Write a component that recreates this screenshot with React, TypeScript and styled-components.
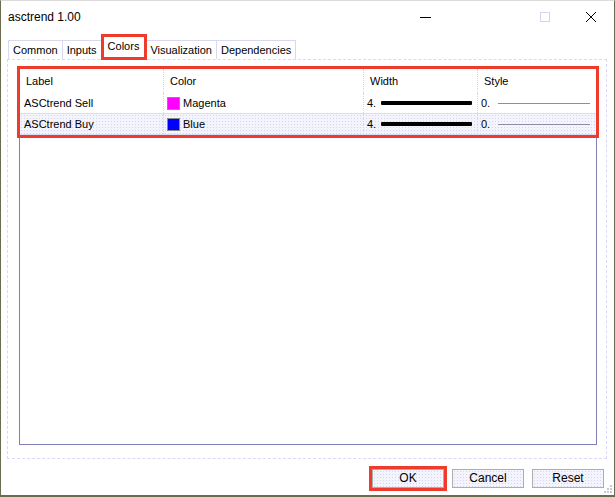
import styled, { createGlobalStyle } from 'styled-components'

const GlobalStyle = createGlobalStyle`
  html, body {
    margin: 0;
    padding: 0;
    background: #ffffff;
  }
  body {
    font-family: "Liberation Sans", Arial, sans-serif;
    font-size: 11px;
    color: #000;
  }
`

const hatch = `
  background-color: #f4f4fc;
  background-image: radial-gradient(#d4d4f2 0.6px, transparent 0.8px);
  background-size: 3px 3px;
`

const Window = styled.div`
  width: 615px;
  height: 497px;
  box-sizing: border-box;
  border: 1px solid #6b6b4f;
  border-top-color: #dcdcdc;
  border-bottom-width: 2px;
  display: flex;
  flex-direction: column;
  background: #fff;
  position: relative;
`

const TitleBar = styled.div`
  height: 31px;
  display: flex;
  align-items: center;
  padding-left: 7px;
`

const Title = styled.div`
  flex: 1;
  font-family: "Liberation Sans", Arial, sans-serif;
  font-size: 12px;
  color: #000;
`

const Caption = styled.div<{ $gap?: number }>`
  width: 46px;
  height: 31px;
  margin-right: ${p => p.$gap ?? 0}px;
  display: flex;
  align-items: center;
  justify-content: center;
`

const TabStrip = styled.div`
  display: flex;
  align-items: flex-end;
  margin: 8px 0 0 7px;
  height: 19px;
`

const Tab = styled.div<{ $active?: boolean; $first?: boolean }>`
  box-sizing: border-box;
  height: ${p => (p.$active ? 24 : 19)}px;
  padding: 0 ${p => (p.$active ? 6 : 4)}px;
  padding-bottom: ${p => (p.$active ? 4 : 0)}px;
  display: flex;
  align-items: center;
  border: 1px solid #d8d8f0;
  border-bottom: none;
  border-left-width: ${p => (p.$first ? 1 : 0)}px;
  background: #fff;
  position: relative;
  ${p =>
    p.$active &&
    `
    outline: 3px solid #ee3b2c;
    outline-offset: -2px;
    z-index: 1;
  `}
`

const Panel = styled.div`
  margin: 0 7px 0 6px;
  height: 400px;
  box-sizing: border-box;
  border: 1px dashed #d8d8f8;
  padding: 8px 9px 13px 11px;
  display: flex;
`

const ListBox = styled.div`
  flex: 1;
  border: 1px solid #8080b4;
  display: flex;
  flex-direction: column;
`

const Marked = styled.div`
  outline: 3px solid #ee3b2c;
  position: relative;
  z-index: 1;
`

const Row = styled.div<{ $head?: boolean; $alt?: boolean }>`
  display: grid;
  grid-template-columns: 143px 200px 114px 1fr;
  height: ${p => (p.$head ? 24 : 20)}px;
  border-bottom: ${p => (p.$head ? 'none' : '1px solid #dcdcf6')};
  ${p => (p.$alt ? hatch : 'background: #fff;')}
`

const Cell = styled.div<{ $sep?: boolean; $pad?: number }>`
  display: flex;
  align-items: center;
  gap: 3px;
  padding-left: ${p => p.$pad ?? 3}px;
  border-left: ${p => (p.$sep ? '1px dotted #d4d4ee' : 'none')};
  overflow: hidden;
  white-space: nowrap;
`

const Swatch = styled.span<{ $c: string }>`
  width: 11px;
  height: 11px;
  background: ${p => p.$c};
  border: 1px solid #8a8a8a;
  flex: none;
`

const ThickLine = styled.span`
  width: 91px;
  height: 4px;
  background: #000;
  border-radius: 1px;
  margin-left: 2px;
`

const ThinLine = styled.span`
  width: 92px;
  height: 1px;
  background: #8c8ca8;
  margin-left: 5px;
`

const Footer = styled.div`
  flex: 1;
  display: flex;
  justify-content: flex-end;
  align-items: center;
  gap: 8px;
  padding: 2px 10px 0 0;
`

const Button = styled.div<{ $marked?: boolean }>`
  width: 72px;
  height: 19px;
  box-sizing: border-box;
  display: flex;
  align-items: center;
  justify-content: center;
  font-size: 12px;
  border: 1px solid #adadad;
  ${hatch}
  ${p =>
    p.$marked &&
    `
    outline: 3px solid #ee3b2c;
  `}
`

const Grip = styled.svg`
  position: absolute;
  right: 1px;
  bottom: 1px;
`

const rows = [
  { label: 'ASCtrend Sell', color: '#ff00ff', name: 'Magenta' },
  { label: 'ASCtrend Buy', color: '#0000ff', name: 'Blue' },
]

export default function App() {
  return (
    <>
      <GlobalStyle />
      <Window>
        <TitleBar>
          <Title>asctrend 1.00</Title>
          <Caption $gap={73}>
            <svg width="12" height="12" viewBox="0 0 12 12">
              <line x1="0" y1="6.5" x2="11" y2="6.5" stroke="#000" strokeWidth="1" />
            </svg>
          </Caption>
          <Caption>
            <svg width="12" height="12" viewBox="0 0 12 12">
              <rect x="1.5" y="1.5" width="9" height="9" fill="none" stroke="#d4d4f0" />
            </svg>
          </Caption>
          <Caption>
            <svg width="12" height="12" viewBox="0 0 12 12">
              <path d="M1 1 L11 11 M11 1 L1 11" stroke="#000" strokeWidth="1" />
            </svg>
          </Caption>
        </TitleBar>
        <TabStrip>
          <Tab $first>Common</Tab>
          <Tab>Inputs</Tab>
          <Tab $active>Colors</Tab>
          <Tab>Visualization</Tab>
          <Tab>Dependencies</Tab>
        </TabStrip>
        <Panel>
          <ListBox>
            <Marked>
              <Row $head>
                <Cell $pad={6}>Label</Cell>
                <Cell $sep $pad={6}>Color</Cell>
                <Cell $sep $pad={6}>Width</Cell>
                <Cell $sep $pad={6}>Style</Cell>
              </Row>
              {rows.map((r, i) => (
                <Row key={r.label} $alt={i === 1}>
                  <Cell $pad={4}>{r.label}</Cell>
                  <Cell $sep $pad={3}>
                    <Swatch $c={r.color} />
                    {r.name}
                  </Cell>
                  <Cell $sep $pad={3}>
                    4.
                    <ThickLine />
                  </Cell>
                  <Cell $sep $pad={3}>
                    0.
                    <ThinLine />
                  </Cell>
                </Row>
              ))}
            </Marked>
          </ListBox>
        </Panel>
        <Footer>
          <Button $marked>OK</Button>
          <Button>Cancel</Button>
          <Button>Reset</Button>
        </Footer>
        <Grip width="9" height="9" viewBox="0 0 9 9">
          <rect x="6" y="0" width="2" height="2" fill="#c8c8d8" />
          <rect x="3" y="3" width="2" height="2" fill="#c8c8d8" />
          <rect x="6" y="3" width="2" height="2" fill="#c8c8d8" />
          <rect x="0" y="6" width="2" height="2" fill="#c8c8d8" />
          <rect x="3" y="6" width="2" height="2" fill="#c8c8d8" />
          <rect x="6" y="6" width="2" height="2" fill="#c8c8d8" />
        </Grip>
      </Window>
    </>
  )
}
